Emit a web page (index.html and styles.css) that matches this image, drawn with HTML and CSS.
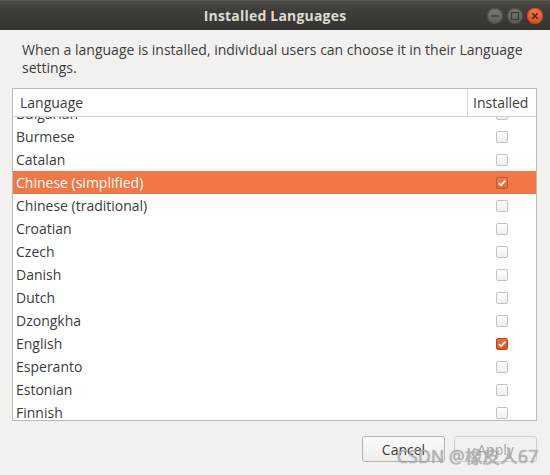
FILE: index.html
```html
<!DOCTYPE html>
<html>
<head>
<meta charset="utf-8">
<link rel="stylesheet" href="styles.css">
</head>
<body>
<div class="window">
  <div class="titlebar">
    <div class="spacer"></div>
    <div class="title">Installed Languages</div>
    <div class="controls">
      <span class="wbtn min"><svg width="16" height="16" viewBox="0 0 16 16"><line x1="4.5" y1="8" x2="11.5" y2="8" stroke="#3a3935" stroke-width="1.3"/></svg></span>
      <span class="wbtn max"><svg width="16" height="16" viewBox="0 0 16 16"><rect x="4.5" y="4.5" width="7" height="7" fill="none" stroke="#3a3935" stroke-width="1.2"/></svg></span>
      <span class="wbtn close"><svg width="16" height="16" viewBox="0 0 16 16"><path d="M5.3 5.3 L10.7 10.7 M10.7 5.3 L5.3 10.7" stroke="#3a2a20" stroke-width="1.4"/></svg></span>
    </div>
  </div>
  <div class="content">
    <p class="desc">When a language is installed, individual users can choose it in their Language settings.</p>
    <div class="list">
      <div class="header">
        <div class="hcell lang">Language</div>
        <div class="hcell inst">Installed</div>
      </div>
      <div class="viewport">
        <div class="rows">
          <div class="row"><span class="name">Bulgarian</span><span class="cell"><span class="cb"></span></span></div>
          <div class="row"><span class="name">Burmese</span><span class="cell"><span class="cb"></span></span></div>
          <div class="row"><span class="name">Catalan</span><span class="cell"><span class="cb"></span></span></div>
          <div class="row selected"><span class="name">Chinese (simplified)</span><span class="cell"><span class="cb checked"><svg width="10" height="10" viewBox="0 0 10 10"><path d="M1.8 5.2 L4 7.3 L8.3 2.6" fill="none" stroke="#fff" stroke-width="1.7"/></svg></span></span></div>
          <div class="row"><span class="name">Chinese (traditional)</span><span class="cell"><span class="cb"></span></span></div>
          <div class="row"><span class="name">Croatian</span><span class="cell"><span class="cb"></span></span></div>
          <div class="row"><span class="name">Czech</span><span class="cell"><span class="cb"></span></span></div>
          <div class="row"><span class="name">Danish</span><span class="cell"><span class="cb"></span></span></div>
          <div class="row"><span class="name">Dutch</span><span class="cell"><span class="cb"></span></span></div>
          <div class="row"><span class="name">Dzongkha</span><span class="cell"><span class="cb"></span></span></div>
          <div class="row"><span class="name">English</span><span class="cell"><span class="cb checked"><svg width="10" height="10" viewBox="0 0 10 10"><path d="M1.8 5.2 L4 7.3 L8.3 2.6" fill="none" stroke="#fff" stroke-width="1.7"/></svg></span></span></div>
          <div class="row"><span class="name">Esperanto</span><span class="cell"><span class="cb"></span></span></div>
          <div class="row"><span class="name">Estonian</span><span class="cell"><span class="cb"></span></span></div>
          <div class="row"><span class="name">Finnish</span><span class="cell"><span class="cb"></span></span></div>
        </div>
      </div>
    </div>
    <div class="actions">
      <button class="btn">Cancel</button>
      <button class="btn disabled">Apply</button>
    </div>
  </div>
  <div class="watermark">CSDN @橡皮人67</div>
</div>
</body>
</html>
```

FILE: styles.css
```css
html, body {
  margin: 0;
  padding: 0;
}
body {
  width: 550px;
  height: 475px;
  overflow: hidden;
  font-family: "Open Sans", "Noto Sans", "Noto Sans CJK SC", sans-serif;
  color: #3c3c3c;
  background: #f2f1f0;
}
.window {
  position: relative;
  width: 550px;
  height: 475px;
  display: flex;
  flex-direction: column;
}
.titlebar {
  height: 30px;
  display: grid;
  grid-template-columns: 1fr auto 1fr;
  align-items: center;
  background: linear-gradient(#4a4944 0%, #3f3e3a 30%, #35342f 100%);
  border-top: 1px solid #5a5954;
  box-sizing: border-box;
}
.title {
  color: #dfdbd2;
  font-weight: bold;
  font-size: 14px;
  letter-spacing: 0.2px;
}
.controls {
  display: flex;
  justify-content: flex-end;
  gap: 4px;
  padding-right: 7px;
}
.wbtn {
  width: 16px;
  height: 16px;
  border-radius: 50%;
  display: flex;
  background: linear-gradient(#7a7973, #5c5b56);
  box-shadow: inset 0 0 0 1px #4a4945;
}
.wbtn.close {
  background: linear-gradient(#f47a4c, #df4c18);
  box-shadow: inset 0 0 0 1px #c2461b;
}
.content {
  flex: 1;
  display: flex;
  flex-direction: column;
  padding: 0 13px 0 12px;
}
.desc {
  margin: 11px 0 0 10px;
  font-size: 14px;
  line-height: 18px;
  color: #3c3c3c;
}
.list {
  margin-top: 11px;
  height: 333px;
  box-sizing: border-box;
  border: 1px solid #bdbbb7;
  background: #fff;
  display: flex;
  flex-direction: column;
}
.header {
  height: 28px;
  box-sizing: border-box;
  border-bottom: 1px solid #d6d4d0;
  display: flex;
}
.hcell {
  font-size: 14px;
  line-height: 27px;
}
.hcell.lang {
  flex: 1;
  padding-left: 7px;
}
.hcell.inst {
  width: 69px;
  box-sizing: border-box;
  border-left: 1px solid #dcdad6;
  padding-left: 5px;
}
.viewport {
  flex: 1;
  overflow: hidden;
}
.rows {
  margin-top: -15px;
}
.row {
  height: 23px;
  display: flex;
  align-items: center;
  font-size: 14px;
}
.row .name {
  flex: 1;
  padding-left: 3px;
}
.row .cell {
  width: 69px;
  display: flex;
  justify-content: center;
}
.row.selected {
  background: #f07746;
  color: #ffffff;
}
.cb {
  width: 12px;
  height: 12px;
  box-sizing: border-box;
  border: 1px solid #c4c2be;
  border-radius: 2px;
  background: linear-gradient(#ffffff, #f0efed);
  display: flex;
  align-items: center;
  justify-content: center;
}
.cb.checked {
  background: linear-gradient(#ee6e3c, #d9551f);
  border-color: #b9481b;
}
.row.selected .cb.checked {
  background: linear-gradient(#f27d4f, #e56a38);
  border-color: #c4582c;
}
.actions {
  display: flex;
  justify-content: flex-end;
  gap: 9px;
  margin-top: 15px;
}
.btn {
  width: 83px;
  height: 26px;
  font-family: inherit;
  font-size: 14px;
  color: #3c3c3c;
  border: 1px solid #b5b3ae;
  border-radius: 3px;
  background: linear-gradient(#fbfbfa, #eeedeb);
  padding: 0;
}
.btn.disabled {
  color: #a9a7a3;
  border-color: #d2d0cc;
  background: #f2f1f0;
}
.watermark {
  position: absolute;
  left: 397px;
  top: 443px;
  font-size: 17.5px;
  color: rgba(188, 188, 188, 0.92);
  text-shadow: 0 0 1px rgba(70, 70, 70, 0.7);
  letter-spacing: 0.2px;
}
```
